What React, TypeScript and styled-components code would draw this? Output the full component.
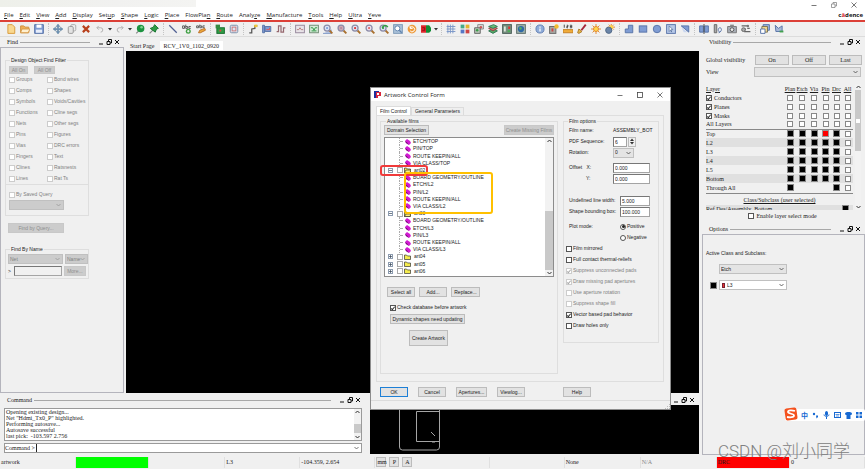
import React from "react";
import styled, { createGlobalStyle, css } from "styled-components";

const SANS = '"Liberation Sans", Arial, sans-serif';
const UI = '"Open Sans", "Liberation Sans", sans-serif';
const SERIF = '"Liberation Serif", "Times New Roman", serif';

const Global = createGlobalStyle`
  *, *::before, *::after { box-sizing: border-box; }
  body { margin: 0; background: #f0f0f0; color: #1c1c1c; font: 5px/7px ${SANS}; }
  button, input, select, textarea { font: inherit; color: inherit; margin: 0; padding: 0; border-radius: 0; }
  svg { display: block; flex: none; }
`;

/* ---------- shell ---------- */
const Page = styled.div`
  display: flex;
  flex-direction: column;
  min-height: 100vh;
  overflow: hidden;
  position: relative;
`;
const TitleBar = styled.header`
  display: flex;
  align-items: center;
  height: 9px;
  background: #fff;
`;
const TitleShade = styled.div`
  width: 196px;
  height: 7px;
  align-self: flex-start;
  background: linear-gradient(90deg, #eef0ea, #f1f1f0 60%, #f4f4f2);
`;
const WindowButtons = styled.div`
  display: flex;
  gap: 14px;
  margin-left: auto;
  padding: 1px 8px 0 0;
`;
const IconButton = styled.button`
  display: flex;
  align-items: center;
  justify-content: center;
  border: 0;
  background: none;
`;
const MenuBar = styled.nav`
  display: flex;
  align-items: center;
  gap: 6px;
  height: 13px;
  padding: 0 2px 0 4px;
  background: #fff;
  border-bottom: 2px solid #dc4037;
  font: 6px/8px ${UI};
`;
const MenuLink = styled.a`
  color: #222;
  text-decoration: none;
`;
const Brand = styled.span`
  margin-left: auto;
  font-weight: bold;
  color: #111;
`;
const BrandAccent = styled.span`
  color: #d8232a;
`;
const Toolbar = styled.div`
  display: flex;
  align-items: center;
  height: 15px;
  padding-left: 4px;
  border-bottom: 1px solid #dcdcdc;
`;
const ToolButton = styled(IconButton)`
  width: 14px;
  height: 13px;
`;
const CaretButton = styled(IconButton)`
  width: 6px;
  height: 13px;
`;
const ToolSeparator = styled.span`
  width: 5px;
  height: 12px;
  display: flex;
  justify-content: center;
  &::before {
    content: "";
    border-left: 1px dotted #c4c4c4;
  }
`;
const Workspace = styled.main`
  display: flex;
  flex: 1;
`;
const LeftArea = styled.div`
  display: flex;
  flex-direction: column;
  flex: 1;
  min-width: 0;
`;
const UpperRow = styled.div`
  display: flex;
  flex: 1;
`;
const LowerRow = styled.div`
  display: flex;
  height: 62px;
  padding-top: 2px;
  gap: 5px;
`;

/* ---------- docks ---------- */
const Dock = styled.section<{ $width?: string; $grow?: boolean }>`
  display: flex;
  flex-direction: column;
  ${(p) => p.$width && `width: ${p.$width}; flex: none;`}
  ${(p) => p.$grow && "flex: 1;"}
`;
const DockHead = styled.div`
  display: flex;
  align-items: center;
  gap: 2px;
  height: 10px;
  padding: 0 4px 0 7px;
  font: 6px/8px ${SERIF};
`;
const DockRule = styled.span`
  flex: 1;
  height: 1px;
  margin-right: 6px;
  background: #a8a8a8;
`;
const DockButtons = styled.span`
  display: flex;
  gap: 2px;
`;
const DockBody = styled.div`
  flex: 1;
  border: 1px solid #b4b4bc;
  padding: 8px 34px 0 4px;
`;
const Canvas = styled.div`
  flex: 1;
  background: #000;
`;
const CenterColumn = styled.div`
  display: flex;
  flex-direction: column;
  flex: 1;
  padding-left: 2px;
`;
const DocTabs = styled.div`
  display: flex;
  align-items: flex-end;
  gap: 3px;
  height: 14px;
  padding: 4px 0 1px 2px;
`;
const DocTab = styled.button<{ $active?: boolean }>`
  height: 9px;
  padding: 0 ${(p) => (p.$active ? 4 : 2)}px;
  border: 0;
  background: ${(p) => (p.$active ? "#fff" : "transparent")};
  font: 6px/8px ${SERIF};
`;

/* ---------- form parts ---------- */
const Group = styled.fieldset<{ $pad?: string }>`
  margin: 0;
  min-width: 0;
  border: 1px solid #dedede;
  padding: ${(p) => p.$pad ?? "0 2px 4px"};
`;
const Legend = styled.legend`
  padding: 0 1px;
  margin-left: 2px;
  line-height: 8px;
  height: 8px;
`;
const Button = styled.button<{ $w?: number; $h?: number; $off?: boolean; $primary?: boolean; $serif?: boolean }>`
  width: ${(p) => (p.$w ? `${p.$w}px` : "auto")};
  height: ${(p) => p.$h ?? 10}px;
  flex: none;
  border: 1px solid ${(p) => (p.$primary ? "#1d7fd6" : p.$off ? "#c8c8c8" : "#bcbcbc")};
  background: ${(p) => (p.$off ? "#cccccc" : "#e2e2e2")};
  color: ${(p) => (p.$off ? "#8e8e8e" : "#1c1c1c")};
  white-space: nowrap;
  ${(p) => p.$serif && `font: 6px/7px ${SERIF};`}
`;
const Check = styled.input`
  appearance: none;
  flex: none;
  width: 6px;
  height: 6px;
  border: 1px solid #555;
  background: #fff;
  display: grid;
  place-items: center;
  &:checked::after {
    content: "";
    width: 2px;
    height: 4px;
    border: solid #333;
    border-width: 0 1px 1px 0;
    transform: rotate(40deg);
  }
  &:disabled {
    border-color: #ccc;
  }
  &:disabled:checked::after {
    border-color: #aaa;
  }
`;
const Radio = styled(Check)`
  border-radius: 50%;
  &:checked::after {
    width: 3px;
    height: 3px;
    border: 0;
    border-radius: 50%;
    background: #222;
    transform: none;
  }
`;
const Label = styled.label<{ $off?: boolean; $serif?: boolean }>`
  display: flex;
  align-items: center;
  gap: 1px;
  white-space: nowrap;
  color: ${(p) => (p.$off ? "#808080" : "#1c1c1c")};
  ${(p) => p.$serif && `font: 6px/8px ${SERIF}; gap: 2px;`}
`;
const Field = styled.input<{ $w: number }>`
  width: ${(p) => p.$w}px;
  height: 10px;
  border: 1px solid #a4a4a4;
  border-top-color: #777;
  border-left-color: #777;
  background: #fff;
  padding-left: 1px;
`;
const NameField = styled(Field)`
  margin-left: 2px;
  background: #f0f0f0;
`;
const SelectFrame = styled.span<{ $w?: number; $tone?: string }>`
  display: grid;
  align-items: center;
  width: ${(p) => (p.$w ? `${p.$w}px` : "auto")};
  flex: ${(p) => (p.$w ? "none" : 1)};
  height: 10px;
  background: ${(p) => p.$tone ?? "#e4e4e4"};
  border: 1px solid #c0c0c0;
  > * { grid-area: 1 / 1; }
  > svg { justify-self: end; margin-right: 2px; pointer-events: none; }
`;
const SelectBox = styled.select<{ $indent?: number; $off?: boolean }>`
  appearance: none;
  border: 0;
  width: 100%;
  height: 8px;
  background: transparent;
  padding-left: ${(p) => p.$indent ?? 1}px;
  color: ${(p) => (p.$off ? "#808080" : "#1c1c1c")};
  opacity: 1;
`;
const ColorChip = styled.span`
  width: 3px;
  height: 5px;
  margin-left: 2px;
  background: #e33;
  border: 1px solid #723;
`;

const Chevron = ({ color = "#555" }: { color?: string }) => (
  <svg width="5" height="4" viewBox="0 0 5 4" fill="none" stroke={color} strokeWidth="0.8"><path d="M0.5 1 2.5 3 4.5 1" /></svg>
);
const Select = ({ name, value, w, tone, off, chip }: { name: string; value: string; w?: number; tone?: string; off?: boolean; chip?: boolean }) => (
  <SelectFrame $w={w} $tone={tone}>
    {chip && <ColorChip />}
    <SelectBox aria-label={name} $off={off} disabled={off} $indent={chip ? 7 : 1}><option>{value}</option></SelectBox>
    <Chevron color={off ? "#999" : "#444"} />
  </SelectFrame>
);

/* ---------- find panel ---------- */
const Row = styled.div<{ $gap?: number; $mt?: number; $pl?: number; $h?: number; $between?: boolean }>`
  display: flex;
  align-items: center;
  gap: ${(p) => p.$gap ?? 2}px;
  margin-top: ${(p) => p.$mt ?? 0}px;
  padding-left: ${(p) => p.$pl ?? 0}px;
  ${(p) => p.$h && `height: ${p.$h}px;`}
  ${(p) => p.$between && "justify-content: space-between;"}
`;
const FilterGrid = styled.div`
  display: grid;
  grid-template-columns: 38px 1fr;
  grid-auto-rows: 11px;
  padding-left: 1px;
`;
const Divider = styled.hr`
  border: 0;
  border-top: 1px solid #dedede;
  margin: 0 -2px;
`;
const QueryBlock = styled.div`
  padding: 6px 0 0 1px;
`;
const NameBlock = styled.div`
  margin-top: 12px;
`;

/* ---------- command + status ---------- */
const CommandBody = styled.div`
  display: flex;
  flex-direction: column;
  gap: 2px;
  padding: 3px 3px 0 4px;
  font: 6px/6px ${SERIF};
`;
const LogFrame = styled.div`
  display: flex;
  height: 33px;
  border: 1px solid #9a9a9a;
  background: #fff;
`;
const Log = styled.pre`
  flex: 1;
  margin: 0;
  display: flex;
  flex-direction: column;
  justify-content: flex-end;
  overflow: hidden;
  padding: 0 0 1px 1px;
  font: inherit;
`;
const Scroll = styled.div<{ $w?: number }>`
  display: flex;
  flex-direction: column;
  align-items: center;
  width: ${(p) => p.$w ?? 7}px;
  background: #f2f2f2;
`;
const Track = styled.div<{ $before: number; $after: number }>`
  flex: 1;
  width: 100%;
  display: grid;
  grid-template-rows: ${(p) => `${p.$before}fr auto ${p.$after}fr`};
`;
const Thumb = styled.div<{ $h: number }>`
  grid-row: 2;
  height: ${(p) => p.$h}px;
  background: #c9c9c9;
  display: grid;
  place-items: center;
`;
const ThumbDot = styled.span`
  width: 4px;
  height: 4px;
  background: #fff;
`;
const Prompt = styled.label`
  display: flex;
  align-items: center;
  height: 10px;
  border: 1px solid #9a9a9a;
  background: #fff;
  gap: 1px;
  padding-right: 2px;
`;
const PromptInput = styled.input`
  flex: 1;
  height: 8px;
  border: 0;
  border-left: 1px solid #222;
  outline: 0;
`;
const StatusBar = styled.footer`
  display: flex;
  align-items: center;
  height: 14px;
  padding: 1px 0;
  font: 6px/8px ${SERIF};
`;
const StatusCell = styled.div<{ $w: number; $fill?: string; $dim?: boolean }>`
  display: flex;
  align-items: center;
  gap: 3px;
  flex: ${(p) => p.$w} 1 0;
  min-width: 0;
  height: 11px;
  padding-left: 1px;
  border-right: 1px solid #e0e0e0;
  white-space: nowrap;
  background: ${(p) => p.$fill ?? "transparent"};
  color: ${(p) => (p.$dim ? "#888" : "#1c1c1c")};
`;
const World = styled.div`
  flex: 1;
  background: #000;
  margin-bottom: 1px;
  overflow: hidden;
`;

/* ---------- right dock ---------- */
const RightColumn = styled.aside`
  display: flex;
  flex-direction: column;
  width: 163px;
  margin-left: 3px;
`;
const VisBody = styled.div`
  display: flex;
  flex-direction: column;
  gap: 2px;
  padding: 8px 4px 0;
  font: 6px/8px ${SERIF};
`;
const VisLabel = styled.span`
  width: 46px;
  flex: none;
  white-space: nowrap;
`;
const LayerFrame = styled.div`
  display: flex;
  gap: 2px;
  height: 126px;
  margin-top: 5px;
  overflow: hidden;
`;
const LayerArea = styled.div`
  flex: 1;
`;
const LayerTable = styled.table`
  width: 100%;
  table-layout: fixed;
  border-collapse: collapse;
  th, td { padding: 0; height: 9px; line-height: 8px; vertical-align: middle; }
  thead th { font-weight: normal; text-decoration: underline; text-align: center; }
  thead th:first-child { text-align: left; }
`;
const LayerRow = styled.tr<{ $shade?: boolean; $rule?: boolean }>`
  background: ${(p) => (p.$shade ? "#e0e0e0" : "transparent")};
  ${(p) => p.$rule && "border-top: 1px solid #888;"}
`;
const Col = styled.col<{ $w?: number }>`
  ${(p) => p.$w && `width: ${p.$w}px;`}
`;
const Swatch = styled.button<{ $color: string }>`
  display: block;
  width: 7px;
  height: 7px;
  border: 1px solid ${(p) => (p.$color === "#000" ? "#888" : "#999")};
  background: ${(p) => p.$color};
`;
const CellSwatch = styled(Swatch)`
  margin: 0 auto;
`;
const CellCheck = styled(Check)`
  margin: 0 auto;
  border-color: #888;
`;
const ClassTitle = styled.div`
  border-top: 1px solid #888;
  margin-top: 1px;
  padding: 2px 0 1px;
  text-align: center;
  text-decoration: underline;
`;
const ClassRow = styled.div`
  display: flex;
  align-items: flex-start;
  justify-content: space-between;
  padding-right: 4px;
  background: #e0e0e0;
`;
const Centered = styled.div`
  display: flex;
  justify-content: center;
  padding-right: 2px;
`;
const OptionsBody = styled.div`
  flex: 1;
  border: 1px solid #b4b4bc;
  padding: 15px 3px 0;
`;

/* ---------- dialog ---------- */
const Dialog = styled.div`
  position: absolute;
  left: 370px;
  top: 87px;
  width: 301px;
  display: flex;
  flex-direction: column;
  background: #f0f0f0;
  border: 1px solid #8d8d8d;
`;
const DialogTitle = styled.div`
  display: flex;
  align-items: center;
  gap: 3px;
  height: 13px;
  padding: 0 7px 0 3px;
  background: #fff;
  font: 6px/8px ${UI};
`;
const DialogWindowButtons = styled.div`
  display: flex;
  gap: 14px;
  margin-left: auto;
`;
const DialogTabs = styled.div`
  display: flex;
  align-items: flex-end;
  padding: 5px 0 0 5px;
`;
const DialogTab = styled.button<{ $active?: boolean }>`
  height: ${(p) => (p.$active ? 9 : 8)}px;
  padding: 0 3px;
  border: 1px solid #dcdcdc;
  border-bottom: 0;
  background: ${(p) => (p.$active ? "#fff" : "#efefef")};
`;
const TabPane = styled.div`
  display: flex;
  gap: 5px;
  margin: 0 6px 0 5px;
  padding: 1px 4px 7px 3px;
  border: 1px solid #dedede;
`;
const FilmsGroup = styled(Group)`
  flex: 1;
  height: 257px;
`;
const FilmOptions = styled(Group)`
  width: 96px;
  height: 226px;
`;
const TreeFrame = styled.div`
  position: relative;
  display: flex;
  height: 140px;
  margin-top: 2px;
  border: 1px solid #8c8c8c;
  background: #fff;
`;
const Tree = styled.ul`
  flex: 1;
  display: grid;
  grid-auto-rows: 1fr;
  margin: 0;
  padding: 0 0 1px;
  list-style: none;
`;
const Leaf = styled.li`
  display: flex;
  align-items: center;
  gap: 2px;
  margin-left: 14px;
  border-left: 1px dotted #aaa;
  white-space: nowrap;
  &::before {
    content: "";
    width: 2px;
    border-top: 1px dotted #aaa;
  }
`;
const Branch = styled.li`
  display: flex;
  align-items: center;
  gap: 1px;
  padding-left: 3px;
`;
const BranchName = styled.span`
  padding-left: 2px;
`;
const BranchCheck = styled(Check)`
  border-color: #aaa;
  margin-left: 3px;
`;
const Highlight = styled.div<{ $kind: "red" | "yellow" }>`
  position: absolute;
  border-radius: 3px;
  pointer-events: none;
  ${(p) =>
    p.$kind === "red"
      ? css`left: -5px; top: 27px; width: 48px; height: 11px; border: 2px solid #f03a3a;`
      : css`left: 19px; top: 34px; width: 89px; height: 42px; border: 2px solid #ffc000;`}
`;
const FormLine = styled.div`
  display: grid;
  grid-template-columns: 44px 1fr;
  align-items: center;
  height: 11px;
  padding-left: 3px;
  white-space: nowrap;
`;
const Trailing = styled.span<{ $indent?: number }>`
  display: flex;
  gap: 1px;
  padding-left: ${(p) => p.$indent ?? 0}px;
`;
const OffsetY = styled.label`
  padding-left: 17px;
`;
const Spinner = styled.span`
  display: flex;
  flex-direction: column;
  width: 8px;
  border: 1px solid #bbb;
  align-items: center;
  justify-content: space-around;
`;
const SpinUp = styled.span`
  transform: rotate(180deg);
`;
const Gap = styled.div<{ $h: number }>`
  height: ${(p) => p.$h}px;
`;
const DialogFoot = styled.div`
  display: flex;
  gap: 10px;
  margin: 5px 0 3px;
  padding-left: 9px;
`;
const HelpSlot = styled.span`
  margin-left: 28px;
`;
const DialogStatus = styled.div`
  display: flex;
  justify-content: flex-end;
  align-items: flex-end;
  height: 9px;
  border-top: 1px solid #dcdcdc;
`;

/* ---------- floating input-method bar and watermark ---------- */
const ImeBar = styled.div`
  position: absolute;
  right: 0;
  bottom: 48px;
  display: flex;
  align-items: center;
  gap: 4px;
  height: 12px;
  padding: 0 3px 0 16px;
  background: #fff;
  border-radius: 2px;
  color: #1769d2;
  font: bold 7px/10px "Noto Sans CJK SC", sans-serif;
`;
const ImeLogo = styled.div`
  position: absolute;
  left: -1px;
  top: -2px;
`;
const Watermark = styled.div`
  position: absolute;
  right: 15px;
  bottom: 8px;
  font: 300 17px/20px Roboto, "Noto Sans CJK SC", sans-serif;
  color: #808080;
  white-space: nowrap;
`;

/* ---------- icons ---------- */
const Svg = ({ children, s = 10 }: { children: React.ReactNode; s?: number }) => (
  <svg width={s} height={s} viewBox="0 0 16 16" fill="none" strokeWidth="1.5">{children}</svg>
);
const lens = (color: string, fill = "#dfe6f5") => (
  <>
    <path d="M10 10 15 15" stroke="#a9702e" strokeWidth="3" />
    <circle cx="6.5" cy="6.5" r="4.8" fill={fill} stroke="#8c8ca8" strokeWidth="2" />
    <circle cx="6.5" cy="6.5" r="1.8" fill={color} />
  </>
);
const blue = { fill: "#7f9cd3", stroke: "#5873a8" };
const icons: Record<string, React.ReactNode> = {
  new: <path d="M3 1h7l4 4v10H3z" fill="#f9d890" stroke="#d99a3a" />,
  open: <><path d="M1 3h5l2 2h6v9H1z" fill="#efb055" stroke="#cf8f3b" /><path d="M3 8h13l-3 6H1z" fill="#fff0cf" stroke="#d59a4a" /></>,
  save: <><path d="M1 1h14v14H1z" {...blue} /><path d="M4 1h8v5H4z" fill="#fff" /><path d="M3 9h10v5H3z" fill="#e8eefa" /></>,
  move: <path d="M8 0 11 4H9v3h3V5l4 3-4 3V9H9v3h2l-3 4-3-4h2V9H4v2L0 8l4-3v2h3V4H5z" fill="#6e93b8" stroke="#456b8c" strokeWidth="0.6" />,
  copy: <><rect x="6" y="1" width="8" height="10" rx="2" fill="#eee" stroke="#aaa" /><rect x="2" y="4" width="8" height="11" rx="2" fill="#e3e3e3" stroke="#999" /></>,
  del: <path d="M3 3 13 13M13 3 3 13" stroke="#b8401c" strokeWidth="3.5" />,
  undo: <path d="M3 6h6a3 3 0 0 1 0 7M6 3 3 6l3 3" stroke="#b4b4b4" strokeWidth="1.6" />,
  redo: <path d="M13 6H7a3 3 0 0 0 0 7M10 3l3 3-3 3" stroke="#b4b4b4" strokeWidth="1.6" />,
  ball: <><path d="M2 15 8 9" stroke="#888" strokeWidth="2" /><circle cx="9" cy="7" r="6" fill="#1d9340" /><circle cx="10.5" cy="5" r="2" fill="#7fd48f" /></>,
  pin: <><path d="M1 15 7 9" stroke="#888" strokeWidth="2" /><path d="m9 1 6 6-3 1-2 5-8-6 5-2z" fill="#2d9b45" stroke="#17742e" /></>,
  line: <path d="M2 2 14 14" stroke="#4f5f92" strokeWidth="2" />,
  abcAdd: <><path d="M1 7V3h3v4H1M6 1v6h3V4H6M14 4h-3v3h3" stroke="#555" /><circle cx="10" cy="11.5" r="4" fill="#43a047" /><path d="M8 11.5h4M10 9.5v4" stroke="#fff" /></>,
  abcEdit: <><path d="M1 6V3h3v3H1M6 1v5h3V3H6M14 3h-3v3h3" stroke="#555" /><path d="m4 14 2-4 8-3 1 3-8 4z" fill="#eda93a" stroke="#bb6d24" /></>,
  boardUp: <><rect x="3" y="6" width="12" height="9" fill="#2d9c45" stroke="#166b2b" /><path d="M1 1h7v6H1z" fill="#358a41" /><path d="M7 9h3v3H7z" fill="#d44" /></>,
  chip: <><rect x="2" y="2" width="12" height="12" rx="2" fill="#dce5f2" stroke="#7c8da6" /><rect x="5" y="5" width="6" height="6" stroke="#c77" /></>,
  route: <><path d="M2 14h4V8l5-1V3h4" stroke="#555" strokeWidth="2" /><path d="M10 1h5v4h-5z" fill="#f1c537" /></>,
  slide: <><path d="M1 2h3v12H1zM5 4h9v8H5z" {...blue} /><path d="M7 9h5V6" stroke="#d55" /></>,
  pulse: <path d="M1 12h3V3h4v10h4V6h3" stroke="#96686f" strokeWidth="2" />,
  gridOff: <><rect x="1" y="2" width="14" height="12" fill="#e8e4e8" stroke="#95869a" /><path d="M3 9h3l2-3 2 3h3" stroke="#b87a7a" /></>,
  gridOn: <><rect x="1" y="2" width="14" height="12" fill="#d6ead8" stroke="#6f8a72" /><path d="M3 6h3l2 4 2-4h3M4 11h8" stroke="#2a9440" /></>,
  zoomFit: <><path d="M0 15h13V9" fill="#b9c8e4" stroke="#7e97c4" />{lens("#7da2dd")}</>,
  zoomAll: lens("#b58aa0", "#cfaab3"),
  zoomIn: lens("#d33"),
  zoomOut: lens("#d66", "#f1e4f2"),
  zoomPrev: <>{lens("#3b9c4b")}<path d="M5 6c3-5 7-4 9-1" stroke="#2f9c41" strokeWidth="2.5" /></>,
  zoomSel: <><rect x="1" y="1" width="14" height="14" fill="#a9c0d8" stroke="#7f9bb8" /><circle cx="7" cy="7" r="4" fill="#fff" stroke="#5f83ae" /><path d="m10 10 4 4" stroke="#5f83ae" strokeWidth="2" /></>,
  refresh: <><circle cx="8" cy="8" r="7" fill="#ee9b3c" /><path d="M5 6a4 4 0 1 1 0 5M5 3v4h4" stroke="#fff" strokeWidth="1.6" /></>,
  toggle: <><path d="M0 2h8v12H0z" fill="#e0262c" /><path d="M8 2h5l3 4v5l-3 3H8z" fill="#118c35" /><path d="M2 6h4v4H2" stroke="#8a1014" /></>,
  grid: <path d="M3 1v14M7 1v14M11 1v14M1 4h14M1 8h14M1 12h14" stroke="#7b96c8" />,
  colors: <><path d="M1 1h6v6H1z" fill="#4a8" /><path d="M9 1h6v6H9z" fill="#e3b52f" /><path d="M1 9h6v6H1z" fill="#5677c5" /><path d="M9 9h6v6H9z" fill="#c44" /></>,
  shadow: <><path d="M6 1h9v7H6z" fill="#ddd" stroke="#888" /><path d="M1 6h9v9H1z" fill="#b7c3b6" stroke="#666" /><circle cx="5" cy="10" r="2" fill="#3a9b48" /><circle cx="11" cy="5" r="2" fill="#c55" /></>,
  layers: <><path d="m1 11 8-3 6 3-7 4z" fill="#5a6" stroke="#375" /><path d="m1 7 8-3 6 3-7 4z" fill="#d66" stroke="#844" /><path d="m1 4 8-3 6 3-7 3z" fill="#6b7" stroke="#375" /></>,
  board3: <><rect x="1" y="1" width="14" height="14" fill="#789180" stroke="#475c55" /><path d="M3 4h3v8H3z" fill="#dce6dc" /><path d="M10 4h3v4h-3z" fill="#d33" /><path d="M9 10h4v3H9z" fill="#4cae56" /></>,
  globe: <><rect x="1" y="1" width="14" height="14" fill="#9eb0ab" stroke="#5f6f6b" /><circle cx="8" cy="8" r="5" fill="#2e68a6" /><path d="M5 6c3-3 5 0 4 2s-4 2-4-2" fill="#51b05a" /></>,
  info: <><circle cx="8" cy="8" r="6.5" fill="#8facd9" stroke="#6380b3" /><path d="M8 7v5M8 4v2" stroke="#fff" strokeWidth="2" /></>,
  boardTip: <><rect x="1" y="4" width="10" height="11" fill="#a7aaa4" stroke="#666" /><path d="M4 7h3v5H4z" fill="#c44" /><circle cx="12" cy="4" r="3.5" fill="#f3bd2f" /></>,
  ruler: <><path d="M2 1v5M6 2h2v2H6v2h2M11 2h3v4h-3M11 4h3" stroke="#444" /><path d="M0 9h16v5H0z" fill="#f1ad3a" stroke="#c27e22" /></>,
  brush: <><path d="M14 1 7 10" stroke="#a5263b" strokeWidth="3" /><path d="m3 8 5 4-5 3-2-1z" fill="#e5bb46" stroke="#aa7628" /></>,
  sun: <><path d="M8 0v16M0 8h16M2.500 2.500l11 11M13.500 2.500l-11 11" stroke="#e2882d" /><circle cx="8" cy="8" r="4" fill="#ffd64a" stroke="#e2882d" /></>,
  sunDim: <><path d="M10 0v10M4 5h12M6 1l8 8M14 1 6 9" stroke="#e2882d" /><circle cx="10" cy="5" r="3" fill="#ffd64a" /><circle cx="6" cy="10" r="5" fill="#6b85a8" stroke="#4f6685" /></>,
  arrow: <path d="m1 8 6-6v4h8v5H7v4z" fill="#f5dc62" stroke="#c99c27" />,
  shapeL: <path d="M7 2h7v12H2V8h5z" {...blue} />,
  shapeR: <rect x="2" y="3" width="12" height="10" {...blue} />,
  shapeC: <circle cx="8" cy="8" r="6" {...blue} />,
  shapeSel: <><rect x="1" y="1" width="14" height="14" fill="#b7c9e8" stroke="#5873a8" /><path d="m5 3 6 6H8l1 4-2-3-2 2z" fill="#fff" stroke="#44608f" strokeWidth="1" /></>,
  shapeCut: <><path d="M2 3h12v10z" {...blue} /><path d="M2 5 12 13H6z" fill="#cbd7ef" /></>,
  mirror: <><path d="M1 3h6v10H1zM9 3h6v10H9z" {...blue} /><path d="M8 0v16" stroke="#444" /></>,
  angle: <><path d="M2 1h4v13H2z" fill="#aaa" stroke="#666" /><path d="M9 14c5-1 6-8 2-8-3 0-4 6 0 7" stroke="#5873a8" /></>,
  camera: <><path d="M1 4h14v10H1z" fill="#a9afb8" stroke="#777" /><circle cx="8" cy="9" r="3" fill="#eee" stroke="#555" /><path d="M5 1h6v3H5z" fill="#888" /></>,
  tune: <><path d="M1 3h9M8 8H3M14 7h-4M5 12h10" stroke="#666" strokeWidth="2" /><circle cx="11" cy="3" r="2" fill="#777" /><circle cx="4" cy="9" r="3" fill="#aaa" stroke="#666" /></>,
  stack: <><path d="M5 1h10v9H5z" fill="#9eb4dc" stroke="#5873a8" /><path d="M3 4h9v9H3z" fill="#f0d58f" stroke="#7c7450" /><path d="M1 8h7v7H1z" fill="#fff" stroke="#5873a8" /></>,
  flow: <><path d="M2 2 7 7l6-4v9H3z" fill="#a8b9d8" stroke="#5873a8" /><path d="M9 12h6" stroke="#42a14f" strokeWidth="3" /></>,
};
const toolGroups = [
  "new open save", "move copy del undo v redo v ball pin", "line abcAdd abcEdit", "boardUp chip", "route slide pulse",
  "gridOff gridOn zoomFit zoomAll zoomIn zoomOut zoomPrev zoomSel refresh toggle v", "grid colors shadow layers board3 globe",
  "info boardTip ruler brush sun sunDim", "shapeL shapeR shapeC shapeSel shapeCut", "mirror angle camera tune", "stack flow",
];

const MinIcon = () => <svg width="6" height="6" viewBox="0 0 6 6" stroke="#555"><path d="M0.5 3.5h5" strokeWidth="0.8" /></svg>;
const MaxIcon = () => <svg width="6" height="6" viewBox="0 0 6 6" fill="none" stroke="#444"><rect x="0.5" y="0.5" width="5" height="5" strokeWidth="0.8" /></svg>;
const RestoreIcon = () => <svg width="6" height="6" viewBox="0 0 6 6" fill="none" stroke="#777" strokeWidth="0.7"><path d="M0.5 2h3.500v3.500H.5zM2 2V.5h3.500V4H4" /></svg>;
const CloseIcon = () => <svg width="6" height="6" viewBox="0 0 6 6" stroke="#555" strokeWidth="0.8"><path d="M.5.500l5 5M5.500.500l-5 5" /></svg>;
const Caret = () => <svg width="4" height="3" viewBox="0 0 4 3"><path d="M0 0h4L2 2.500z" fill="#333" /></svg>;
const Arrow = ({ up }: { up?: boolean }) => (
  <svg width="5" height="6" viewBox="0 0 5 6" fill="none" stroke="#333"><path d={up ? "M.5 4 2.500 2l2 2" : "M.5 2l2 2 2-2"} /></svg>
);

const DockControls = () => (
  <DockButtons>
    <IconButton aria-label="Minimize"><svg width="6" height="6" viewBox="0 0 6 6"><path d="M1 5h4" stroke="#111" /></svg></IconButton>
    <IconButton aria-label="Float"><svg width="6" height="6" viewBox="0 0 6 6" fill="none" stroke="#111"><path d="M1 2.500h3v3H1zM2.500 2V.5h3V4H4" /></svg></IconButton>
    <IconButton aria-label="Close"><svg width="6" height="6" viewBox="0 0 6 6"><path d="M1 1l4 4M5 1 1 5" stroke="#111" /></svg></IconButton>
  </DockButtons>
);
const Head = ({ title }: { title?: string }) => (
  <DockHead>{title}<DockRule /><DockControls /></DockHead>
);

const menus: [string, number][] = [["File", 0], ["Edit", 0], ["View", 0], ["Add", 0], ["Display", 0], ["Setup", 3], ["Shape", 0], ["Logic", 0], ["Place", 0], ["FlowPlan", 7], ["Route", 0], ["Analyze", 5], ["Manufacture", 0], ["Tools", 0], ["Help", 0], ["Ultra", 0], ["Yeve", 0]];
const filters = ["Groups", "Bond wires", "Comps", "Shapes", "Symbols", "Voids/Cavities", "Functions", "Cline segs", "Nets", "Other segs", "Pins", "Figures", "Vias", "DRC errors", "Fingers", "Text", "Clines", "Ratsnests", "Lines", "Rat Ts"];
const tree = ["ETCH/TOP", "PIN/TOP", "ROUTE KEEPIN/ALL", "VIA CLASS/TOP", "-art02", "BOARD GEOMETRY/OUTLINE", "ETCH/L2", "PIN/L2", "ROUTE KEEPIN/ALL", "VIA CLASS/L2", "-art03", "BOARD GEOMETRY/OUTLINE", "ETCH/L3", "PIN/L3", "ROUTE KEEPIN/ALL", "VIA CLASS/L3", "+art04", "+art05", "+art06"];
const columns = ["Plan", "Etch", "Via", "Pin", "Drc", "All"];
const layers = ["Top", "L2", "L3", "L4", "L5", "Bottom", "Through All"];
const switches: [string, boolean, boolean][] = [["Film mirrored", false, false], ["Full contact thermal-reliefs", false, false], ["Suppress unconnected pads", true, true], ["Draw missing pad apertures", true, true], ["Use aperture rotation", false, true], ["Suppress shape fill", false, true], ["Vector based pad behavior", true, false], ["Draw holes only", false, false]];
const log = ["Opening existing design...", 'Net "Hdmi_Tx0_P" highlighted.', "Performing autosave...", "Autosave successful", "last pick:  -103.597 2.756"];

const Tick = ({ text, on, off, serif }: { text: string; on?: boolean; off?: boolean; serif?: boolean }) => (
  <Label $off={off} $serif={serif}><Check type="checkbox" defaultChecked={on} disabled={off} />{text}</Label>
);

const TreeRow = ({ text }: { text: string }) => {
  if (text[0] !== "-" && text[0] !== "+")
    return (
      <Leaf>
        <svg width="7" height="6" viewBox="0 0 7 6"><path d="M1 2 3 0l3 2 1 2-2 2-3-2z" fill="#d21bd2" /><path d="M1 2 3 3.500 5 6 2 4z" fill="#6d096d" /></svg>
        {text}
      </Leaf>
    );
  const open = text[0] === "-";
  return (
    <Branch>
      <svg width="5" height="5" viewBox="0 0 5 5" fill="none" stroke="#8d9cb0"><rect x=".5" y=".5" width="4" height="4" /><path d={open ? "M1 2.500h3" : "M1 2.500h3M2.500 1v3"} stroke="#345" strokeWidth="0.7" /></svg>
      <BranchCheck type="checkbox" aria-label={text.slice(1)} />
      <svg width="7" height="6" viewBox="0 0 7 6" stroke="#333" strokeWidth="0.7"><path d="M.5 5.500V1h2l1 1h3v3.500z" fill="#f5ec4e" />{open && <path d="M.5 5.500 2 3h5L6 5.500z" fill="#fff27a" />}</svg>
      <BranchName>{text.slice(1)}</BranchName>
    </Branch>
  );
};

export default function App() {
  return (
    <Page>
      <Global />
      <TitleBar>
        <TitleShade />
        <WindowButtons>
          <IconButton aria-label="Minimize"><MinIcon /></IconButton>
          <IconButton aria-label="Restore"><RestoreIcon /></IconButton>
          <IconButton aria-label="Close"><CloseIcon /></IconButton>
        </WindowButtons>
      </TitleBar>
      <MenuBar>
        {menus.map(([m, i]) => (
          <MenuLink href="#" key={m}>{m.slice(0, i)}<u>{m[i]}</u>{m.slice(i + 1)}</MenuLink>
        ))}
        <Brand>c<BrandAccent>ā</BrandAccent>dence</Brand>
      </MenuBar>
      <Toolbar>
        {toolGroups.map((g, gi) => (
          <React.Fragment key={g}>
            {gi > 0 && <ToolSeparator />}
            {g.split(" ").map((n, i) =>
              n === "v" ? <CaretButton key={i} aria-label="More"><Caret /></CaretButton> : <ToolButton key={i} aria-label={n}><Svg>{icons[n]}</Svg></ToolButton>
            )}
          </React.Fragment>
        ))}
      </Toolbar>

      <Workspace>
        <LeftArea>
          <UpperRow>
            <Dock $width="124px">
              <Head title="Find" />
              <DockBody>
                <Group $pad="0 2px 5px">
                  <Legend>Design Object Find Filter</Legend>
                  <Row $gap={6} $mt={2} $pl={1}><Button $w={19} $h={8} $off>All On</Button><Button $w={21} $h={8} $off>All Off</Button></Row>
                  <FilterGrid>{filters.map((f) => <Tick key={f} text={f} off />)}</FilterGrid>
                  <Divider />
                  <QueryBlock>
                    <Tick text="By Saved Query" off />
                    <Row $mt={2}><Select name="Saved query" value="" w={55} tone="#cccccc" off /></Row>
                  </QueryBlock>
                </Group>
                <Row $mt={7} $pl={3}><Button $w={56} $off>Find by Query...</Button></Row>
                <NameBlock>
                  <Group $pad="1px 2px 2px">
                    <Legend>Find By Name</Legend>
                    <Row><Select name="Object type" value="Net" w={55} tone="#cccccc" off /><Select name="Match by" value="Name" w={23} tone="#cccccc" off /></Row>
                    <Row $mt={2}><Label>&gt;<NameField $w={48} aria-label="Name" /></Label><Button $w={22} $off>More...</Button></Row>
                  </Group>
                </NameBlock>
              </DockBody>
            </Dock>
            <CenterColumn>
              <DocTabs><DocTab>Start Page</DocTab><DocTab $active>RCV_1V0_1102_0920</DocTab></DocTabs>
              <Canvas />
            </CenterColumn>
          </UpperRow>
          <LowerRow>
            <Dock $width="365px">
              <Head title="Command" />
              <CommandBody>
                <LogFrame>
                  <Log>{log.map((l) => <span key={l}>{l}</span>)}</Log>
                  <Scroll><Arrow up /><Track $before={9} $after={1}><Thumb $h={9} /></Track><Arrow /></Scroll>
                </LogFrame>
                <Prompt>Command &gt;<PromptInput /><Chevron /></Prompt>
              </CommandBody>
            </Dock>
            <Dock $grow>
              <Head />
              <World>
                <svg width="70" height="60" viewBox="0 0 70 60" fill="none" stroke="#a5a5a5"><rect x="29.5" y="-10" width="40" height="55" rx="3" /><path d="M69 6.500H46.500V36.500H69M61 27l2 2 2 2M62 37h3" /></svg>
              </World>
            </Dock>
          </LowerRow>
        </LeftArea>

        <RightColumn>
          <Dock>
            <Head title="Visibility" />
            <VisBody>
              <Row $gap={3}><VisLabel>Global visibility</VisLabel><Button $serif $w={34}>On</Button><Button $serif $w={34}>Off</Button><Button $serif $w={33}>Last</Button></Row>
              <Row $gap={2}><VisLabel>View</VisLabel><Select name="View" value="" /></Row>
              <LayerFrame>
                <LayerArea>
                  <LayerTable>
                    <colgroup><Col /><Col $w={12} /><Col $w={12} /><Col $w={12} /><Col $w={11} /><Col $w={11} /><Col $w={11} /></colgroup>
                    <thead><tr><th>Layer</th>{columns.map((c) => <th key={c}>{c}</th>)}</tr></thead>
                    <tbody>
                      {["Conductors", "Planes", "Masks", "All Layers"].map((n, i) => (
                        <tr key={n}>
                          <td>{i < 3 ? <Tick text={n} on serif /> : n}</td>
                          {columns.map((c) => <td key={c}><CellCheck type="checkbox" aria-label={`${n} ${c}`} /></td>)}
                        </tr>
                      ))}
                      {layers.map((n, i) => (
                        <LayerRow key={n} $shade={i % 2 === 1} $rule={i === 0}>
                          <td>{n}</td>
                          {columns.map((c, k) => (
                            <td key={c}>
                              {k === 5 ? <CellCheck type="checkbox" aria-label={`${n} all`} /> : i === 6 && k > 0 && k < 4 ? null : <CellSwatch aria-label={`${n} ${c}`} $color={i === 0 && k === 3 ? "#f00" : "#000"} />}
                            </td>
                          ))}
                        </LayerRow>
                      ))}
                    </tbody>
                  </LayerTable>
                  <ClassTitle>Class/Subclass (user selected)</ClassTitle>
                  <ClassRow>Ref Des/Assembly_Bottom<Swatch aria-label="Ref Des colour" $color="#000" /></ClassRow>
                </LayerArea>
                <Scroll $w={6}><Arrow up /><Track $before={0} $after={1}><Thumb $h={61}><ThumbDot /></Thumb></Track><Arrow /></Scroll>
              </LayerFrame>
              <Centered><Tick text="Enable layer select mode" serif /></Centered>
            </VisBody>
          </Dock>
          <Gap $h={4} />
          <Dock $grow>
            <Head title="Options" />
            <OptionsBody>
              Active Class and Subclass:
              <Row $mt={7} $pl={13}><Select name="Class" value="Etch" w={68} /></Row>
              <Row $mt={6} $pl={4}><Swatch aria-label="Subclass colour" $color="#000" /><Select name="Subclass" value="L3" w={68} tone="#fff" chip /></Row>
            </OptionsBody>
          </Dock>
        </RightColumn>
      </Workspace>

      <StatusBar>
        <StatusCell $w={76}>artwork</StatusCell>
        <StatusCell $w={73} $fill="#0f0" />
        <StatusCell $w={76} />
        <StatusCell $w={75}>L3</StatusCell>
        <StatusCell $w={75}>-104.359, 2.654</StatusCell>
        <StatusCell $w={115}><Button $serif $w={10}>mm</Button><Button $serif $w={10}>P</Button><Button $serif $w={10}>A</Button></StatusCell>
        <StatusCell $w={75} />
        <StatusCell $w={76}>None</StatusCell>
        <StatusCell $w={76} $dim>N/A</StatusCell>
        <StatusCell $w={73} $fill="#f00">DRC</StatusCell>
        <StatusCell $w={75}>0</StatusCell>
      </StatusBar>

      <Dialog role="dialog" aria-label="Artwork Control Form">
        <DialogTitle>
          <svg width="7" height="7" viewBox="0 0 7 7"><path d="M0 0h5v2H2v5H0z" fill="#1d2f9e" /><path d="M2 1h5v4H4v2H2z" fill="#d9263b" /><path d="M3 2h2v2H3z" fill="#fff" /></svg>
          Artwork Control Form
          <DialogWindowButtons>
            <IconButton aria-label="Minimize"><MinIcon /></IconButton>
            <IconButton aria-label="Maximize"><MaxIcon /></IconButton>
            <IconButton aria-label="Close"><CloseIcon /></IconButton>
          </DialogWindowButtons>
        </DialogTitle>
        <DialogTabs><DialogTab $active>Film Control</DialogTab><DialogTab>General Parameters</DialogTab></DialogTabs>
        <TabPane>
          <FilmsGroup $pad="0 3px">
            <Legend>Available films</Legend>
            <Row $between><Button $w={45}>Domain Selection</Button><Button $w={50} $off>Create Missing Films</Button></Row>
            <TreeFrame>
              <Tree>{tree.map((t, i) => <TreeRow key={i} text={t} />)}</Tree>
              <Scroll $w={8}><Arrow up /><Track $before={1} $after={0}><Thumb $h={59} /></Track><Arrow /></Scroll>
              <Highlight $kind="red" /><Highlight $kind="yellow" />
            </TreeFrame>
            <Row $mt={10} $pl={3} $gap={4}><Button $w={28}>Select all</Button><Button $w={28}>Add...</Button><Button $w={29}>Replace...</Button></Row>
            <Row $mt={7} $pl={6}><Tick text="Check database before artwork" on /></Row>
            <Row $mt={3} $pl={6}><Button $w={75}>Dynamic shapes need updating</Button></Row>
            <Row $mt={6} $pl={25}><Button $w={39} $h={16}>Create Artwork</Button></Row>
          </FilmsGroup>
          <FilmOptions $pad="0 2px">
            <Legend>Film options</Legend>
            <FormLine>Film name:<span>ASSEMBLY_BOT</span></FormLine>
            <FormLine><label htmlFor="seq">PDF Sequence:</label><Trailing><Field id="seq" $w={14} defaultValue="6" /><Spinner><SpinUp><Caret /></SpinUp><Caret /></Spinner></Trailing></FormLine>
            <FormLine>Rotation:<Select name="Rotation" value="0" w={21} /></FormLine>
            <Gap $h={4} />
            <FormLine><label htmlFor="ox">Offset &nbsp; X:</label><Field id="ox" $w={37} defaultValue="0.000" /></FormLine>
            <FormLine><OffsetY htmlFor="oy">Y:</OffsetY><Field id="oy" $w={37} defaultValue="0.000" /></FormLine>
            <Gap $h={11} />
            <FormLine><label htmlFor="lw">Undefined line width:</label><Trailing $indent={7}><Field id="lw" $w={30} defaultValue="5.000" /></Trailing></FormLine>
            <FormLine><label htmlFor="bb">Shape bounding box:</label><Trailing $indent={7}><Field id="bb" $w={30} defaultValue="100.000" /></Trailing></FormLine>
            <Gap $h={4} />
            <FormLine>Plot mode:<Trailing $indent={7}><Label><Radio type="radio" name="plot" defaultChecked />Positive</Label></Trailing></FormLine>
            <FormLine><span /><Trailing $indent={7}><Label><Radio type="radio" name="plot" />Negative</Label></Trailing></FormLine>
            {switches.map(([t, on, off]) => <Row key={t} $h={11}><Tick text={t} on={on} off={off} /></Row>)}
          </FilmOptions>
        </TabPane>
        <DialogFoot>
          <Button $primary $w={28}>OK</Button><Button $w={28}>Cancel</Button><Button $w={31}>Apertures...</Button><Button $w={28}>Viewlog...</Button>
          <HelpSlot><Button $w={28}>Help</Button></HelpSlot>
        </DialogFoot>
        <DialogStatus><svg width="5" height="5" viewBox="0 0 5 5" fill="#bbb"><path d="M4 0h1v1H4zM2 2h1v1H2zM4 2h1v1H4zM0 4h1v1H0zM2 4h1v1H2zM4 4h1v1H4z" /></svg></DialogStatus>
      </Dialog>

      <ImeBar>
        <ImeLogo><svg width="15" height="15" viewBox="0 0 15 15"><rect x="1" y="1" width="12" height="12" rx="2" fill="#f4511e" transform="rotate(-8 7 7)" /><path d="M11 4c-3-1-7-1-7 1s6 1.500 6 3.500-4 2-7 1.500" fill="none" stroke="#fff" strokeWidth="1.800" /></svg></ImeLogo>
        <span>中</span>
        <svg width="7" height="7" viewBox="0 0 7 7" fill="#1769d2"><circle cx="2" cy="2" r="1.2" /><path d="M4 3.500h2V5L4.500 6.500z" /></svg>
        <svg width="7" height="8" viewBox="0 0 7 8" fill="none" stroke="#1769d2"><rect x="2.5" y=".5" width="2" height="4" rx="1" fill="#1769d2" /><path d="M1 3.500C1 6 6 6 6 3.500M3.500 5.500V8" /></svg>
        <svg width="7" height="6" viewBox="0 0 7 6" fill="none" stroke="#1769d2"><rect x=".5" y=".5" width="6" height="5" /><path d="M1.500 2.500h4M2 4h3" strokeWidth=".7" /></svg>
        <svg width="7" height="7" viewBox="0 0 7 7" fill="#1769d2"><path d="M0 1 2 0h3l2 1-.5 2H5.500v4h-4V3H.5z" /></svg>
        <svg width="6" height="6" viewBox="0 0 6 6" fill="#1769d2"><path d="M0 0h2.500v2.500H0zM3.500 0H6v2.500H3.500zM0 3.500h2.500V6H0zM3.500 3.500H6V6H3.500z" /></svg>
      </ImeBar>
      <Watermark>CSDN @刘小同学</Watermark>
    </Page>
  );
}
